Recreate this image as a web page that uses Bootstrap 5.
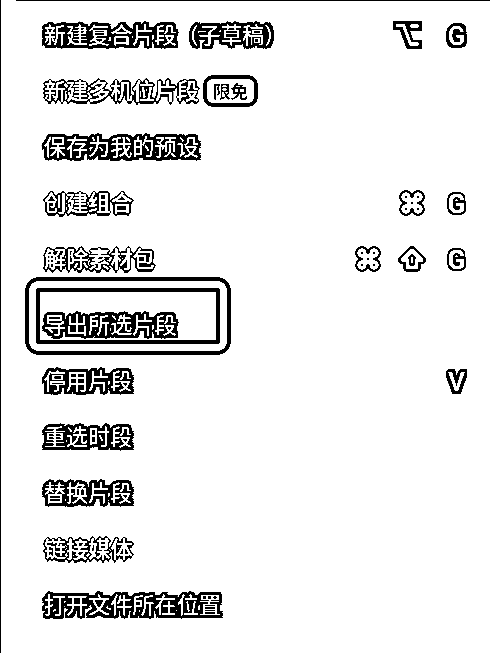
<!DOCTYPE html>
<html lang="zh-CN">
<head>
<meta charset="utf-8">
<meta name="viewport" content="width=device-width, initial-scale=1">
<title>片段菜单</title>
<link href="https://cdn.jsdelivr.net/npm/bootstrap@5.3.0/dist/css/bootstrap.min.css" rel="stylesheet">
<style>
body{font-family:"Noto Sans CJK SC",sans-serif;background:#fff;height:653px;overflow:hidden}
/* two-tone rendering: every edge is pure black or pure white */
.menu-panel{height:653px;border-left:1px solid #000;padding:7px 26px 0 42px;background:#fff;filter:brightness(1.35) contrast(30)}
.menu-edge{top:0;left:15px;width:474px;height:1px;background:#000}
.menu-item{height:56px;font-size:22.15px;line-height:53px;white-space:nowrap;color:#fff;display:flex}
.label-on,.key-on{font-weight:400;text-shadow:3px 0 #000,-3px 0 #000,0 3px #000,0 -3px #000,2px 2px #000,-2px 2px #000,2px -2px #000,-2px -2px #000,3px 1px #000,3px -1px #000,-3px 1px #000,-3px -1px #000,1px 3px #000,-1px 3px #000,1px -3px #000,-1px -3px #000,1px 0 #000,-1px 0 #000,0 1px #000,0 -1px #000,3px 3px #000,-3px 3px #000,3px -3px #000}
.label-on{padding-left:.8px}
.paren-group{font-size:21.9px}
.paren-end{font-feature-settings:"halt"}
.label-off{font-weight:500;padding-left:1px;text-shadow:1px 0 #000,-1px 0 #000,0 2px #000,0 -2px #000,1px 1px #000,-1px 1px #000,1px -1px #000,-1px -1px #000,-2px 0 #000,2px 0 #000,0 3px #000}
.keys{height:56px;gap:12px}
.key{width:32px;flex:none;font-family:Roboto,sans-serif;font-size:25.5px;display:flex;justify-content:center;align-items:center}
.key-alt{margin-right:5px}
.key-on,.key-off{font-weight:500;padding-top:3px;padding-left:1px}
.key-off{-webkit-text-stroke:.4px #fff;text-shadow:2px 0 #000,-2px 0 #000,0 2px #000,0 -2px #000,2px 1px #000,-2px 1px #000,2px -1px #000,-2px -1px #000,1px 2px #000,-1px 2px #000,1px -2px #000,-1px -2px #000,1px 0 #000,-1px 0 #000,2px 2px #000,-2px 2px #000,2px -2px #000,-2px -2px #000}
.free-tag{height:32px;width:55px;border:4px solid #000;border-radius:10px;font-size:17.5px;font-weight:500;line-height:23px;color:#000;text-align:center;margin:12px 0 0 4px;-webkit-text-stroke:.3px #000}
.focus-frame{left:24px;top:277px;width:206px;height:78px;border:4px solid #000;border-radius:14px;padding:7px}
.focus-inner{border:4px solid #000;border-radius:2px}
.after-frame{margin-top:10px}
</style>
</head>
<body>
<svg width="0" height="0" class="d-none"><symbol id="cmd" viewBox="0 0 30 30"><path d="M11.500 11.500V8A3.500 3.500 0 1 0 8 11.500H22A3.500 3.500 0 1 0 18.500 8V22A3.500 3.500 0 1 0 22 18.500H8A3.500 3.500 0 1 0 11.500 22Z" fill="#000" stroke="#000" stroke-width="9"/><path d="M11.500 11.500V8A3.500 3.500 0 1 0 8 11.500H22A3.500 3.500 0 1 0 18.500 8V22A3.500 3.500 0 1 0 22 18.500H8A3.500 3.500 0 1 0 11.500 22Z" fill="none" stroke="#fff" stroke-width="3.300"/></symbol></svg>
<main class="menu-panel position-relative">
<div class="menu-edge position-absolute"></div>
<div class="focus-frame position-absolute"><div class="focus-inner w-100 h-100"></div></div>
<div class="menu-item"><span class="label-on">新建复合片段<span class="paren-group">（子草稿<span class="paren-end">）</span></span></span>
<div class="keys d-flex ms-auto"><span class="key key-alt"><svg width="29" height="28" viewBox="0 0 29 28" fill="none"><path d="M4.500 4.500H10L17 23.500H24.500M18 5H24.500" stroke="#000" stroke-width="9.500" stroke-linecap="square"/><path d="M4.500 4.500H10.500L17.500 23H24.500M18.500 5H24.500" stroke="#fff" stroke-width="2.800" stroke-linecap="round"/></svg></span><span class="key key-on">G</span></div></div>
<div class="menu-item"><span class="label-off">新建多机位片段</span><span class="free-tag">限免</span></div>
<div class="menu-item"><span class="label-on">保存为我的预设</span></div>
<div class="menu-item"><span class="label-off">创建组合</span>
<div class="keys d-flex ms-auto"><span class="key"><svg width="26" height="26"><use href="#cmd"/></svg></span><span class="key key-off">G</span></div></div>
<div class="menu-item"><span class="label-off">解除素材包</span>
<div class="keys d-flex ms-auto"><span class="key"><svg width="26" height="26"><use href="#cmd"/></svg></span><span class="key"><svg width="28" height="26" viewBox="0 0 28 26" stroke-linejoin="round"><path d="M14 4.500L23.500 14H18.500V21.500H9.500V14H4.500Z" fill="#000" stroke="#000" stroke-width="9"/><path d="M14 4.500L23.500 14H18.500V21.500H9.500V14H4.500Z" fill="#000" stroke="#fff" stroke-width="3.600"/><ellipse cx="14" cy="14" rx="1.300" ry="3" fill="#fff"/></svg></span><span class="key key-off">G</span></div></div>
<div class="menu-item after-frame"><span class="label-on position-relative">导出所选片段</span></div>
<div class="menu-item"><span class="label-on">停用片段</span><div class="keys d-flex ms-auto"><span class="key key-on">V</span></div></div>
<div class="menu-item"><span class="label-on">重选时段</span></div>
<div class="menu-item"><span class="label-on">替换片段</span></div>
<div class="menu-item"><span class="label-off">链接媒体</span></div>
<div class="menu-item"><span class="label-on">打开文件所在位置</span></div>
</main>
<script src="https://cdn.jsdelivr.net/npm/bootstrap@5.3.0/dist/js/bootstrap.bundle.min.js"></script>
</body>
</html>
